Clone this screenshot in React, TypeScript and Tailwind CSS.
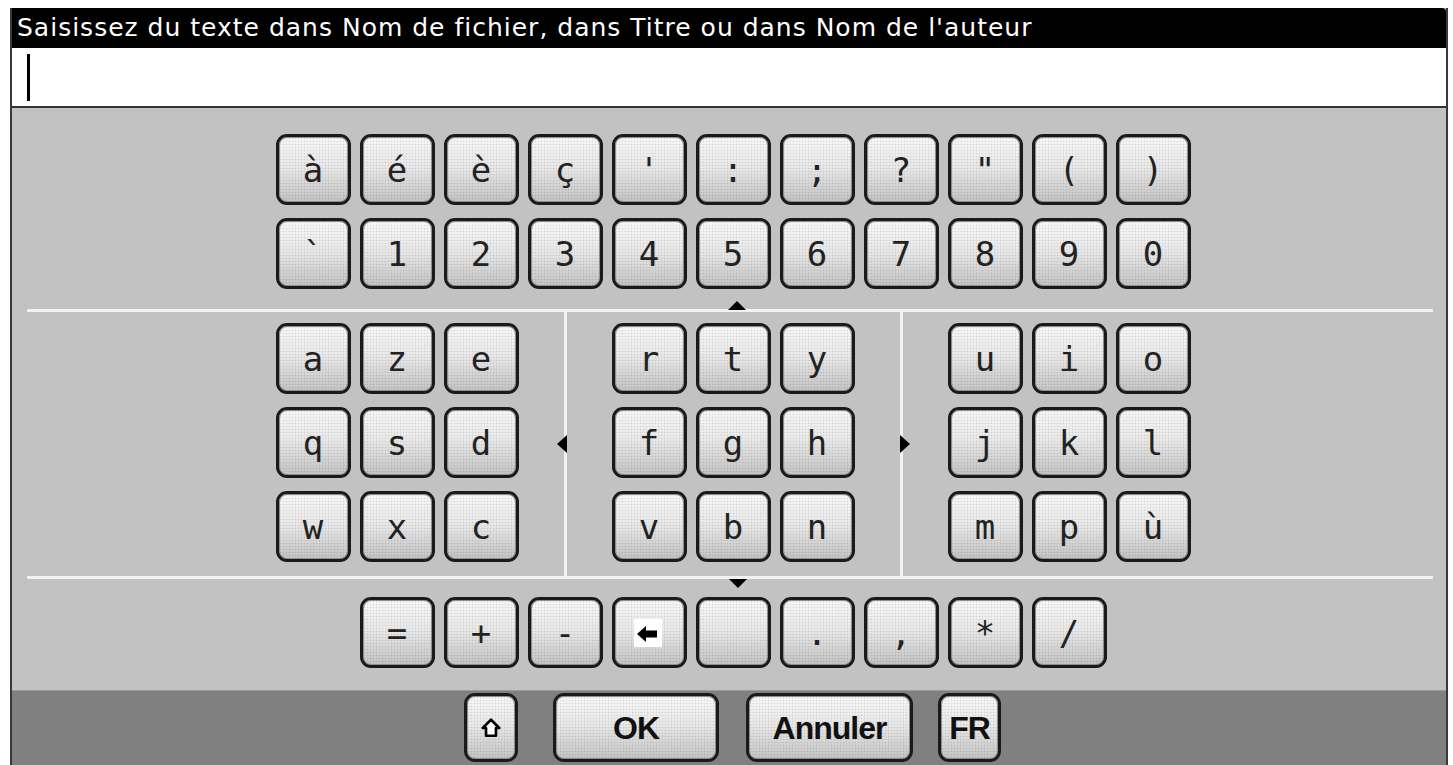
const topRows = [
  ['à', 'é', 'è', 'ç', "'", ':', ';', '?', '"', '(', ')'],
  ['`', '1', '2', '3', '4', '5', '6', '7', '8', '9', '0'],
];

const letterGroups = [
  [['a', 'z', 'e'], ['q', 's', 'd'], ['w', 'x', 'c']],
  [['r', 't', 'y'], ['f', 'g', 'h'], ['v', 'b', 'n']],
  [['u', 'i', 'o'], ['j', 'k', 'l'], ['m', 'p', 'ù']],
];

const lastRow = ['=', '+', '-', 'back', 'space', '.', ',', '*', '/'];

const keyFace =
  "rounded-[11px] border-[3px] border-[#1a1a1a] bg-[image:radial-gradient(rgba(0,0,0,0.12)_0.6px,transparent_1.1px),linear-gradient(180deg,#f7f7f7_0%,#e9e9e9_45%,#c3c3c3_100%)] [background-size:3px_3px,100%_100%] shadow-[inset_0_0_0_1px_#8f8f8f]";

function Key({ label }: { label: string }) {
  return (
    <div
      className={`flex h-[71px] w-[75px] shrink-0 items-center justify-center font-['DejaVu_Sans_Mono',monospace] text-[34px] leading-none text-[#222] ${keyFace}`}
    >
      {label === 'back' ? <BackArrow /> : label === 'space' ? null : label}
    </div>
  );
}

function BackArrow() {
  return (
    <svg width="28" height="28" viewBox="0 0 28 28" className="-ml-[2px]">
      <rect x="0" y="0" width="28" height="28" fill="#fff" />
      <path d="M3 15 L12 7 L12 11.5 L23 11.5 L23 18.5 L12 18.5 L12 23 Z" fill="#000" />
    </svg>
  );
}

function HomeIcon() {
  return (
    <svg width="22" height="22" viewBox="0 0 20 20">
      <path
        d="M10 2.5 L17.5 10 L14.5 10 L14.5 17 L5.5 17 L5.5 10 L2.5 10 Z"
        fill="#fff"
        stroke="#000"
        strokeWidth="2.4"
        strokeLinejoin="round"
      />
    </svg>
  );
}

function Triangle({ dir }: { dir: 'up' | 'down' | 'left' | 'right' }) {
  const paths = {
    up: 'M0 9 L9 0 L18 9 Z',
    down: 'M0 0 L18 0 L9 9 Z',
    left: 'M10 0 L10 18 L0 9 Z',
    right: 'M0 0 L10 9 L0 18 Z',
  };
  const vertical = dir === 'up' || dir === 'down';
  return (
    <svg
      width={vertical ? 18 : 10}
      height={vertical ? 9 : 18}
      viewBox={vertical ? '0 0 18 9' : '0 0 10 18'}
    >
      <path d={paths[dir]} fill="#000" />
    </svg>
  );
}

function BarButton({ children, className = '' }: { children: React.ReactNode; className?: string }) {
  return (
    <div
      className={`flex h-[69px] shrink-0 items-center justify-center font-['Liberation_Sans',Arial,sans-serif] text-[32px] font-bold tracking-[-1px] text-[#111] ${keyFace} ${className}`}
    >
      {children}
    </div>
  );
}

export default function App() {
  return (
    <div className="h-[765px] w-[1453px] overflow-hidden bg-white pl-[10px] pr-[5px] pt-[8px]">
      <div className="flex h-full flex-col border-x-2 border-[#3a3a3a] bg-[#c2c2c2]">
        {/* title */}
        <div className="flex h-[40px] items-center rounded-tr-[4px] bg-black pl-[5px] font-['DejaVu_Sans',sans-serif] text-[25px] tracking-[1px] text-white">
          Saisissez du texte dans Nom de fichier, dans Titre ou dans Nom de l'auteur
        </div>

        {/* input field */}
        <div className="flex h-[60px] items-center border-b-2 border-[#333] bg-white pl-[15px]">
          <div className="h-[47px] w-[3px] bg-black" />
        </div>

        {/* keyboard */}
        <div className="flex flex-1 flex-col pl-[8px] pt-[26px]">
          <div className="flex flex-col items-center gap-[13px]">
            {topRows.map((row, i) => (
              <div key={i} className="flex gap-[9px]">
                {row.map((k) => (
                  <Key key={k} label={k} />
                ))}
              </div>
            ))}
          </div>

          <div className="relative ml-[7px] mr-[13px] mt-[20px] flex justify-center gap-[45px] border-y-[3px] border-[#f2f2f2] pl-[6px]">
            <div className="absolute left-[701px] top-[-11px]">
              <Triangle dir="up" />
            </div>
            <div className="absolute bottom-[-12px] left-[702px]">
              <Triangle dir="down" />
            </div>
            {letterGroups.map((group, gi) => (
              <div key={gi} className="flex gap-[45px]">
                {gi > 0 && (
                  <div className="relative w-[3px] bg-[#f2f2f2]">
                    <div
                      className={`absolute top-1/2 -translate-y-1/2 ${gi === 1 ? 'left-[-7px]' : 'left-0'}`}
                    >
                      <Triangle dir={gi === 1 ? 'left' : 'right'} />
                    </div>
                  </div>
                )}
                <div className="flex flex-col gap-[13px] pb-[14px] pt-[11px]">
                  {group.map((row, ri) => (
                    <div key={ri} className="flex gap-[9px]">
                      {row.map((k) => (
                        <Key key={k} label={k} />
                      ))}
                    </div>
                  ))}
                </div>
              </div>
            ))}
          </div>

          <div className="mt-[18px] flex justify-center gap-[9px]">
            {lastRow.map((k) => (
              <Key key={k} label={k} />
            ))}
          </div>
        </div>

        {/* action bar */}
        <div className="flex h-[75px] items-start border-t border-[#9a9a9a] bg-[#808080] pl-[452px] pt-[2px]">
          <BarButton className="w-[54px]">
            <HomeIcon />
          </BarButton>
          <BarButton className="ml-[35px] w-[166px]">OK</BarButton>
          <BarButton className="ml-[27px] w-[167px]">Annuler</BarButton>
          <BarButton className="ml-[25px] w-[63px]">FR</BarButton>
        </div>
      </div>
    </div>
  );
}
